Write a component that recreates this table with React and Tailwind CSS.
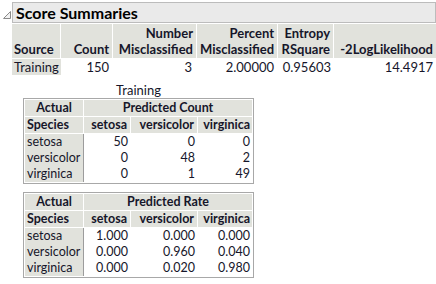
import React from "react";

const font = { fontFamily: 'Lato, "Noto Sans", sans-serif' };

const hdr = "bg-[#e1e2dc]";

function Disclosure() {
  return (
    <svg width="10" height="10" viewBox="0 0 10 10" className="mt-[8px] shrink-0">
      <polygon points="8.5,1.5 8.5,8.5 1.5,8.5" fill="#f2f2f2" stroke="#8a8a8a" strokeWidth="1" />
    </svg>
  );
}

function SummaryTable() {
  const th = `${hdr} font-bold align-bottom leading-[16px] px-[3px] pb-[1px] border-r border-white whitespace-nowrap`;
  return (
    <table className="table-fixed w-[424px] border-separate border-spacing-0 text-[13px] text-[#16162a] mt-[1px]">
      <colgroup>
        <col className="w-[49px]" />
        <col className="w-[52px]" />
        <col className="w-[84px]" />
        <col className="w-[81px]" />
        <col className="w-[56px]" />
        <col className="w-[102px]" />
      </colgroup>
      <thead>
        <tr className="h-[34px]">
          <th className={`${th} text-left pl-[2px]`}>Source</th>
          <th className={`${th} text-right`}>Count</th>
          <th className={`${th} text-right`}>Number<br />Misclassified</th>
          <th className={`${th} text-right`}>Percent<br />Misclassified</th>
          <th className={`${th} text-right`}>Entropy<br />RSquare</th>
          <th className={`${th} text-right border-r-0`}>-2LogLikelihood</th>
        </tr>
      </thead>
      <tbody>
        <tr className="h-[17px] leading-[16px]">
          <td className={`${hdr} text-left pl-[2px] border-t border-white`}>Training</td>
          <td className="text-right px-[4px]">150</td>
          <td className="text-right px-[5px]">3</td>
          <td className="text-right px-[4px]">2.00000</td>
          <td className="text-right px-[3px]">0.95603</td>
          <td className="text-right px-[3px]">14.4917</td>
        </tr>
      </tbody>
    </table>
  );
}

function MatrixTable({ title, rows }) {
  const head = `${hdr} font-bold leading-[16px] border-r border-b border-white whitespace-nowrap`;
  return (
    <div className="border border-[#a8a8a8] bg-white p-[1px] w-[231px]">
      <table className="table-fixed border-separate border-spacing-0 text-[12.5px] text-[#16162a] w-full">
        <colgroup>
          <col className="w-[59px]" />
          <col className="w-[47px]" />
          <col className="w-[67px]" />
          <col className="w-[54px]" />
        </colgroup>
        <thead>
          <tr>
            <th className={`${head} text-center`}>Actual</th>
            <th colSpan={3} className={`${head} text-center border-r-0`}>{title}</th>
          </tr>
          <tr>
            <th className={`${head} text-left pl-[2px]`}>Species</th>
            <th className={`${head} text-right pr-[3px]`}>setosa</th>
            <th className={`${head} text-right pr-[3px]`}>versicolor</th>
            <th className={`${head} text-right pr-[2px] border-r-0`}>virginica</th>
          </tr>
        </thead>
        <tbody>
          {rows.map(([label, ...vals]) => (
            <tr key={label} className="leading-[16px]">
              <td className={`${hdr} text-left pl-[2px] border-r border-[#9c9c9c] whitespace-nowrap`}>{label}</td>
              {vals.map((v, i) => (
                <td key={i} className={`text-right ${i === 2 ? "pr-[2px]" : "pr-[3px]"}`}>{v}</td>
              ))}
            </tr>
          ))}
        </tbody>
      </table>
    </div>
  );
}

export default function App() {
  return (
    <div className="w-[436px] h-[284px] bg-white overflow-hidden" style={font}>
      <div className="flex pt-[2px] pl-[2px]">
        <Disclosure />
        <div className="flex flex-col">
          <div className="w-[424px] h-[21px] bg-[#eaeaea] border border-[#bcbcbc] flex items-center pl-[3px]">
            <span className="text-[16px] font-bold text-black leading-none">Score Summaries</span>
          </div>
          <SummaryTable />
          <div className="flex flex-col ml-[11px] mt-[7px] w-[231px]">
            <div className="text-center text-[13px] leading-[16px] text-[#16162a]">Training</div>
            <MatrixTable
              title="Predicted Count"
              rows={[
                ["setosa", "50", "0", "0"],
                ["versicolor", "0", "48", "2"],
                ["virginica", "0", "1", "49"],
              ]}
            />
            <div className="h-[8px]" />
            <MatrixTable
              title="Predicted Rate"
              rows={[
                ["setosa", "1.000", "0.000", "0.000"],
                ["versicolor", "0.000", "0.960", "0.040"],
                ["virginica", "0.000", "0.020", "0.980"],
              ]}
            />
          </div>
        </div>
      </div>
    </div>
  );
}
